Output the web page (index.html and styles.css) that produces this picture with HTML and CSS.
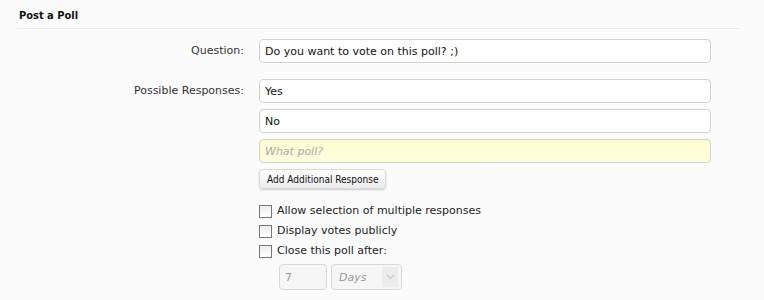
FILE: index.html
```html
<!DOCTYPE html>
<html lang="en">
<head>
<meta charset="UTF-8">
<title>Post a Poll</title>
<link rel="stylesheet" href="styles.css">
</head>
<body>
<div class="poll-form">
  <h3 class="section-header">Post a Poll</h3>

  <div class="form-row">
    <label class="row-label" for="question">Question:</label>
    <div class="row-controls">
      <input type="text" id="question" class="text-input" value="Do you want to vote on this poll? ;)">
    </div>
  </div>

  <div class="form-row">
    <label class="row-label">Possible Responses:</label>
    <div class="row-controls">
      <input type="text" class="text-input" value="Yes">
      <input type="text" class="text-input" value="No">
      <input type="text" class="text-input focused" placeholder="What poll?">
      <button type="button" class="small-button">Add Additional Response</button>

      <ul class="check-list">
        <li><label><span class="checkbox"></span>Allow selection of multiple responses</label></li>
        <li><label><span class="checkbox"></span>Display votes publicly</label></li>
        <li><label><span class="checkbox"></span>Close this poll after:</label></li>
      </ul>

      <div class="close-after">
        <input type="text" class="text-input number-input" value="7" disabled>
        <div class="select-box">
          <span>Days</span>
          <span class="select-arrow">
            <svg width="9" height="6" viewBox="0 0 9 6"><path d="M1 1 L4.5 4.5 L8 1" fill="none" stroke="#c8c8c8" stroke-width="1.3"/></svg>
          </span>
        </div>
      </div>
    </div>
  </div>
</div>
</body>
</html>
```

FILE: styles.css
```css
body {
  margin: 0;
  background-color: #fbfbfc;
  font-family: "DejaVu Sans", sans-serif;
  font-size: 11px;
  color: #222;
}
.poll-form {
  padding: 9px 24px 0 17px;
}
.section-header {
  margin: 0;
  padding: 0 2px 6px;
  font-family: "DejaVu Sans Condensed", "DejaVu Sans", sans-serif;
  font-size: 11px;
  font-weight: bold;
  color: #111;
  border-bottom: 1px solid #e6e8ec;
}
.form-row {
  display: grid;
  grid-template-columns: 227px 452px;
  column-gap: 15px;
  margin-top: 10px;
}
.form-row + .form-row {
  margin-top: 16px;
}
.row-label {
  text-align: right;
  color: #333;
  line-height: 24px;
}
.row-controls {
  display: flex;
  flex-direction: column;
  align-items: flex-start;
  gap: 6px;
}
.text-input {
  box-sizing: border-box;
  width: 100%;
  height: 24px;
  margin: 0;
  padding: 0 5px;
  font-family: inherit;
  font-size: 11px;
  color: #111;
  background: #fff;
  border: 1px solid #d2d2d2;
  border-radius: 4px;
}
.text-input.focused {
  background: linear-gradient(#fbfbd8, #ffffd4 40%, #fdfde0);
  border-color: #d4d4b8;
}
.text-input::placeholder {
  color: #a8a8a8;
  font-style: italic;
}
.small-button {
  height: 20px;
  padding: 0 7px 0 7px;
  font-family: "DejaVu Sans Condensed", "DejaVu Sans", sans-serif;
  font-size: 10px;
  color: #111;
  background: linear-gradient(#ffffff, #ececee);
  border: 1px solid #dcdcdc;
  border-radius: 4px;
  box-shadow: 0 1px 2px rgba(0, 0, 0, 0.2);
}
.check-list {
  list-style: none;
  margin: 6px 0 0;
  padding: 0;
}
.check-list li {
  height: 20px;
}
.check-list label {
  display: flex;
  align-items: center;
  gap: 5px;
  line-height: 20px;
  color: #222;
}
.checkbox {
  width: 11px;
  height: 11px;
  border: 1px solid #777;
  background: linear-gradient(#eeeeee, #ffffff);
}
.close-after {
  display: flex;
  gap: 4px;
  margin: -3px 0 0 20px;
}
.number-input {
  width: 48px;
  height: 26px;
  color: #999;
  background: #f6f6f6;
  border-color: #d8d8d8;
}
.select-box {
  box-sizing: border-box;
  width: 71px;
  height: 26px;
  padding: 0 3px 0 7px;
  display: flex;
  align-items: center;
  justify-content: space-between;
  color: #999;
  font-style: italic;
  background: #f6f6f6;
  border: 1px solid #d8d8d8;
  border-radius: 4px;
}
.select-arrow {
  width: 16px;
  height: 20px;
  display: flex;
  align-items: center;
  justify-content: center;
  background: #ececec;
}
```
